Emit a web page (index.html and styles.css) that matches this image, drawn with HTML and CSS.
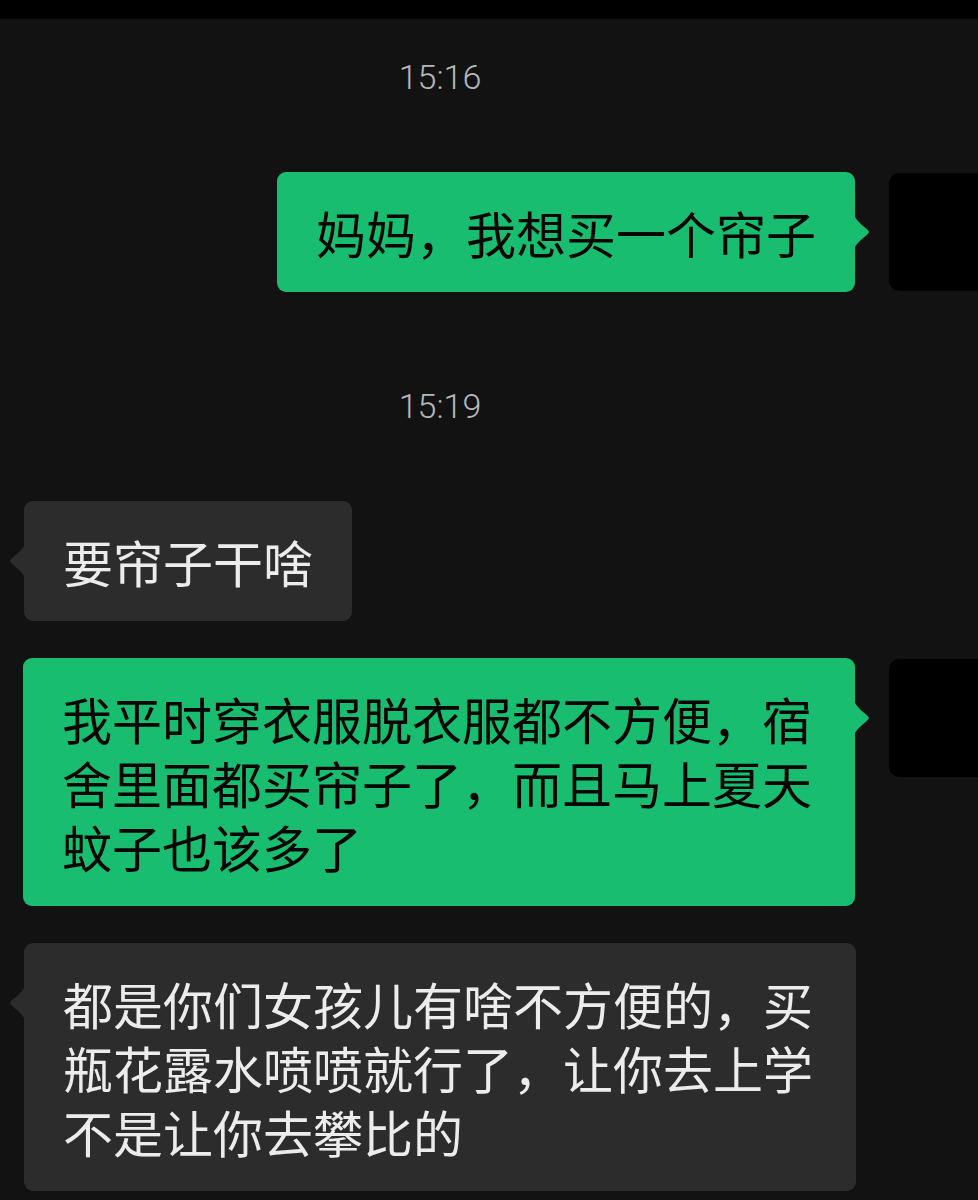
FILE: index.html
```html
<!DOCTYPE html>
<html lang="zh-CN">
<head>
    <meta charset="UTF-8">
    <title>聊天</title>
    <link rel="stylesheet" href="styles.css">
</head>
<body>
<div class="topbar"></div>

<div class="chat">
    <div class="time time-first">15:16</div>

    <div class="row row-me">
        <div class="bubble bubble-me">妈妈，我想买一个帘子</div>
        <div class="avatar"></div>
    </div>

    <div class="time">15:19</div>

    <div class="row row-other">
        <div class="bubble bubble-other">要帘子干啥</div>
    </div>

    <div class="row row-me">
        <div class="bubble bubble-me">我平时穿衣服脱衣服都不方便，宿舍里面都买帘子了，而且马上夏天蚊子也该多了</div>
        <div class="avatar"></div>
    </div>

    <div class="row row-other">
        <div class="bubble bubble-other">都是你们女孩儿有啥不方便的，买瓶花露水喷喷就行了，让你去上学不是让你去攀比的</div>
    </div>
</div>
</body>
</html>
```

FILE: styles.css
```css
html, body { margin: 0; background: #121212; overflow-x: hidden; }
body { font-family: "Noto Sans CJK SC", "Noto Sans", sans-serif; }

.topbar { height: 19px; background: #000; }

.chat { display: flex; flex-direction: column; }

/* 时间戳 */
.time {
    font-family: Roboto, "Liberation Sans", sans-serif;
    font-weight: 300;
    font-size: 34px;
    line-height: 40px;
    color: #b8b8b8;
    text-align: center;
    padding-right: 98px;
    margin: 57px 0 75px;
}
.time-first { margin-top: 38px; }

.row { display: flex; align-items: flex-start; margin-bottom: 37px; }
.row-me { justify-content: flex-end; }
.row-other { justify-content: flex-start; padding-left: 24px; }

.bubble {
    position: relative;
    max-width: 754px;
    padding: 28px 39px;
    border-radius: 9px;
    font-size: 50px;
    line-height: 64px;
}
.bubble::after {
    content: "";
    position: absolute;
    top: 42px;
    width: 15px;
    height: 36px;
}

.bubble-me { background: #19bd6f; color: #050505; margin-right: 34px; }
.bubble-me::after {
    left: calc(100% - 1px);
    background: #19bd6f;
    clip-path: path("M0 0 C2 9, 14 14, 15 18 C14 22, 2 27, 0 36 Z");
}

.bubble-other { background: #2c2c2c; color: #ececec; }
.bubble-other::after {
    right: calc(100% - 1px);
    background: #2c2c2c;
    clip-path: path("M15 0 C13 9, 1 14, 0 18 C1 22, 13 27, 15 36 Z");
}

.avatar {
    flex: none;
    width: 89px;
    height: 118px;
    margin-top: 1px;
    background: #000;
    border-radius: 10px 0 0 10px;
}
```
